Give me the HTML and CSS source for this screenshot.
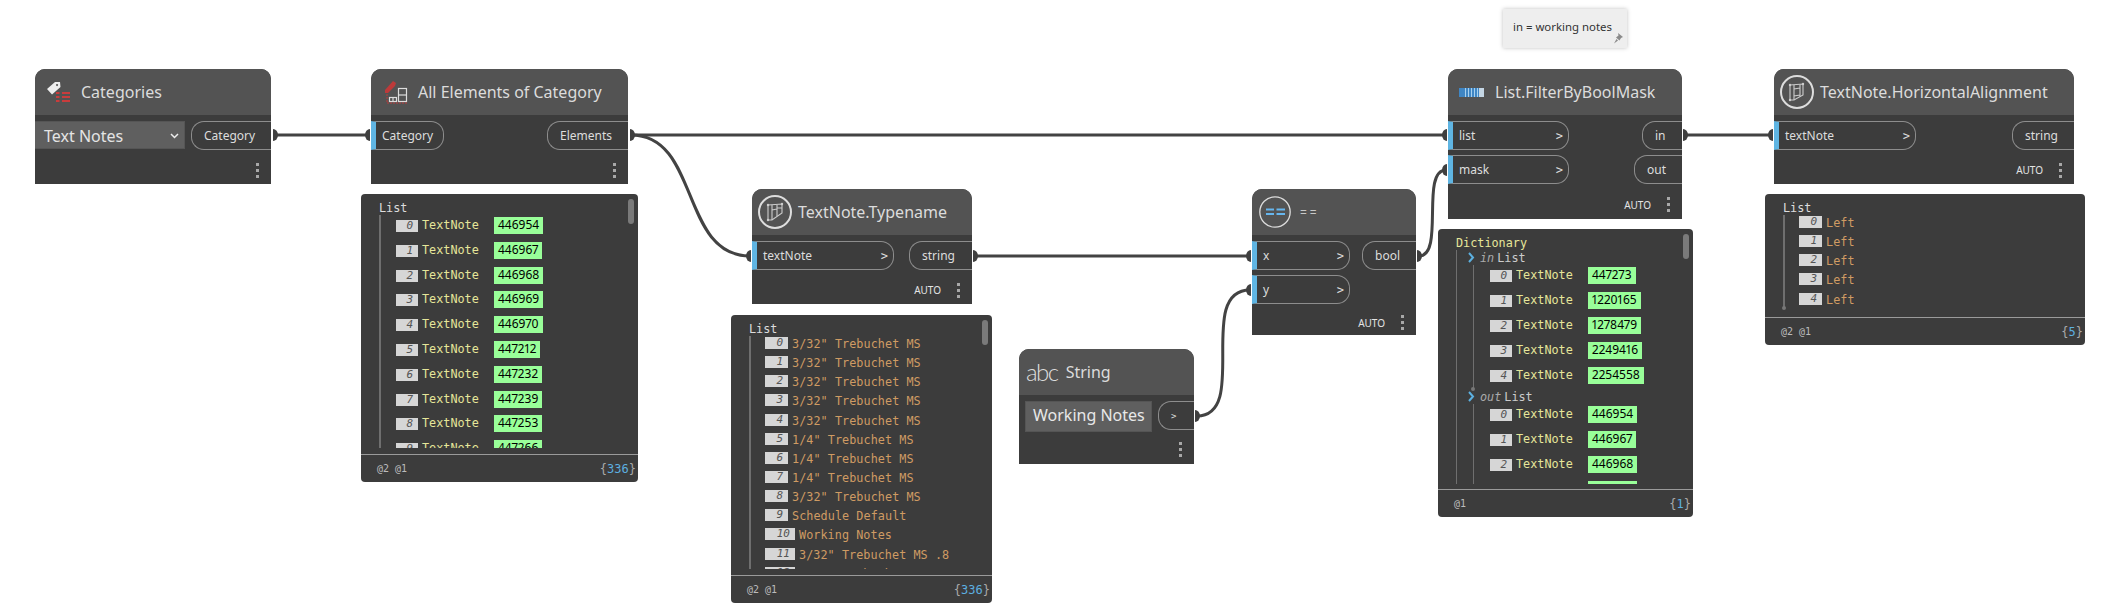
FILE: index.html
```html
<!DOCTYPE html>
<html>
<head>
  <title>Filter text notes by type</title>
  <link rel="stylesheet" href="styles.css">
</head>
<body>
  <main class="canvas">

    <!-- wires sit under the nodes -->
    <svg class="wires" width="2110" height="614" viewBox="0 0 2110 614">
      <path class="wire" d="M274 135 L369 135"/>
      <path class="wire" d="M631 135 L1446 135"/>
      <path class="wire" d="M631 135 C700 135 680 256 750 256"/>
      <path class="wire" d="M975 256 L1250 256"/>
      <path class="wire" d="M1419 256 C1445 256 1420 170 1446 170"/>
      <path class="wire" d="M1197 416 C1250 416 1195 290 1250 290"/>
      <path class="wire" d="M1685 135 L1772 135"/>
      <path class="nub" d="M273 129 a5 6 0 0 1 0 12 z"/>
      <path class="nub" d="M370 129 a5 6 0 0 0 0 12 z"/>
      <path class="nub" d="M630 129 a5 6 0 0 1 0 12 z"/>
      <path class="nub" d="M751 250 a5 6 0 0 0 0 12 z"/>
      <path class="nub" d="M973 250 a5 6 0 0 1 0 12 z"/>
      <path class="nub" d="M1251 250 a5 6 0 0 0 0 12 z"/>
      <path class="nub" d="M1251 284 a5 6 0 0 0 0 12 z"/>
      <path class="nub" d="M1417 250 a5 6 0 0 1 0 12 z"/>
      <path class="nub" d="M1195 410 a5 6 0 0 1 0 12 z"/>
      <path class="nub" d="M1447 129 a5 6 0 0 0 0 12 z"/>
      <path class="nub" d="M1447 164 a5 6 0 0 0 0 12 z"/>
      <path class="nub" d="M1683 129 a5 6 0 0 1 0 12 z"/>
      <path class="nub" d="M1773 129 a5 6 0 0 0 0 12 z"/>
    </svg>

    <!-- Categories -->
    <section class="node node-categories">
      <header class="node-head">
        <svg class="icon icon-categories" width="24" height="22" viewBox="0 0 24 22">
          <path fill="#eee" fill-rule="evenodd" d="M1 8 L9 1 L14 1 L14.500 6 L6 13.500 Z M11 3 a1 1 0 1 0 0.100 0 Z"/>
          <g fill="#c93c3c">
            <rect x="10" y="11" width="3.500" height="2"/><rect x="16" y="11" width="8" height="2"/>
            <rect x="10" y="15" width="3.500" height="2"/><rect x="16" y="15" width="8" height="2"/>
            <rect x="10" y="19" width="3.500" height="2"/><rect x="16" y="19" width="8" height="2"/>
          </g>
        </svg>
        <span class="node-title">Categories</span>
      </header>
      <div class="node-ports">
        <div class="picker">
          <span>Text Notes</span>
          <svg width="9" height="6" viewBox="0 0 9 6"><path d="M1 1 L4.500 4.500 L8 1" fill="none" stroke="#eee" stroke-width="1.500"/></svg>
        </div>
        <div class="port-out w-80">Category</div>
      </div>
      <footer class="node-foot"><span class="dots"></span></footer>
    </section>

    <!-- All Elements of Category -->
    <section class="node node-elements">
      <header class="node-head">
        <svg class="icon icon-elements" width="25" height="24" viewBox="0 0 25 24">
          <path fill="#bd3a3a" d="M1 10 L9 1 L12 3 L11 6 L4 13 L1 13 Z"/>
          <path d="M3 14 V23 H24" fill="none" stroke="#bd3a3a" stroke-width="1" stroke-dasharray="2 1"/>
          <g fill="none" stroke="#ddd" stroke-width="1.200">
            <rect x="14.500" y="8.500" width="8" height="13"/><path d="M14.500 15 H22.500"/>
            <rect x="5.500" y="17.500" width="7" height="4"/><path d="M9 17.500 V21.500"/>
          </g>
        </svg>
        <span class="node-title">All Elements of Category</span>
      </header>
      <div class="node-ports">
        <div class="port-in w-73"><span>Category</span></div>
        <div class="port-out w-81">Elements</div>
      </div>
      <footer class="node-foot"><span class="dots"></span></footer>
    </section>

    <!-- TextNote.Typename -->
    <section class="node node-typename">
      <header class="node-head">
        <svg class="icon icon-round" width="34" height="34" viewBox="0 0 34 34">
          <circle cx="17" cy="17" r="16" fill="none" stroke="#ddd" stroke-width="2"/>
          <g fill="none" stroke="#ccc" stroke-width="1.100">
            <path d="M10 10 L24 9 V18 L14 25 H10 Z"/>
            <path d="M14 10 V25 M19 10 V21 M14 15 L19 14 M19 13 H24"/>
          </g>
          <g fill="#ccc">
            <circle cx="10" cy="25" r="1.200"/><circle cx="24" cy="9" r="1.200"/><circle cx="10" cy="10" r="1.200"/>
          </g>
        </svg>
        <span class="node-title">TextNote.Typename</span>
      </header>
      <div class="node-ports">
        <div class="port-in w-142"><span>textNote</span><b>&gt;</b></div>
        <div class="port-out w-63">string</div>
      </div>
      <footer class="node-foot"><span class="auto">AUTO</span><span class="dots"></span></footer>
    </section>

    <!-- == -->
    <section class="node node-equals">
      <header class="node-head">
        <svg class="icon icon-equals" width="32" height="32" viewBox="0 0 32 32">
          <circle cx="16" cy="16" r="15.200" fill="none" stroke="#ddd" stroke-width="1.300"/>
          <path d="M7 13.500 H15 M17.500 13.500 H26 M7 18 H15 M17.500 18 H26" stroke="#66b6ee" stroke-width="2"/>
        </svg>
        <span class="node-title title-equals">==</span>
      </header>
      <div class="node-ports">
        <div class="port-stack">
          <div class="port-in w-98"><span>x</span><b>&gt;</b></div>
          <div class="port-in w-98"><span>y</span><b>&gt;</b></div>
        </div>
        <div class="port-out w-54">bool</div>
      </div>
      <footer class="node-foot"><span class="auto">AUTO</span><span class="dots"></span></footer>
    </section>

    <!-- String -->
    <section class="node node-string">
      <header class="node-head">
        <span class="icon-abc">abc</span>
        <span class="node-title">String</span>
      </header>
      <div class="node-ports">
        <div class="text-field">Working Notes</div>
        <div class="port-out w-36"><b class="small-arrow">&gt;</b></div>
      </div>
      <footer class="node-foot"><span class="dots"></span></footer>
    </section>

    <!-- List.FilterByBoolMask -->
    <aside class="note">in = working notes
      <svg class="pin" width="10" height="11" viewBox="0 0 10 11">
        <path fill="#8a8a8a" d="M5 0 L10 4 L8 5 L6.500 7.500 L3 4.500 L5.500 2.500 Z M3.500 6 L5 7.500 L1 10.500 Z"/>
      </svg>
    </aside>
    <section class="node node-filter">
      <header class="node-head">
        <svg class="icon icon-filter" width="25" height="9" viewBox="0 0 25 9">
          <rect width="25" height="9" fill="#3f86c4"/>
          <path d="M6.500 0 V9 M9.500 0 V9 M12.500 0 V9 M15.500 0 V9 M18.500 0 V9" stroke="#a8d0ee" stroke-width="1"/>
          <rect x="20" width="5" height="9" fill="#c4d6e4"/>
        </svg>
        <span class="node-title">List.FilterByBoolMask</span>
      </header>
      <div class="node-ports">
        <div class="port-stack">
          <div class="port-in w-121"><span>list</span><b>&gt;</b></div>
          <div class="port-in w-121"><span>mask</span><b>&gt;</b></div>
        </div>
        <div class="port-stack end">
          <div class="port-out w-40">in</div>
          <div class="port-out w-48">out</div>
        </div>
      </div>
      <footer class="node-foot"><span class="auto">AUTO</span><span class="dots"></span></footer>
    </section>

    <!-- TextNote.HorizontalAlignment -->
    <section class="node node-alignment">
      <header class="node-head">
        <svg class="icon icon-round" width="34" height="34" viewBox="0 0 34 34">
          <circle cx="17" cy="17" r="16" fill="none" stroke="#ddd" stroke-width="2"/>
          <g fill="none" stroke="#ccc" stroke-width="1.100">
            <path d="M10 10 L23 9 V20 L14 25 H10 Z"/>
            <path d="M14 10 V25 M20 9.500 V21.500 M14 14 L20 13 M14 21 L20 20"/>
          </g>
          <g fill="#ccc">
            <circle cx="10" cy="25" r="1.200"/><circle cx="23" cy="9" r="1.200"/><circle cx="10" cy="10" r="1.200"/>
          </g>
        </svg>
        <span class="node-title">TextNote.HorizontalAlignment</span>
      </header>
      <div class="node-ports">
        <div class="port-in w-142"><span>textNote</span><b>&gt;</b></div>
        <div class="port-out w-62">string</div>
      </div>
      <footer class="node-foot"><span class="auto">AUTO</span><span class="dots"></span></footer>
    </section>

    <!-- watch: elements -->
    <aside class="watch watch-elements">
      <div class="watch-body">
        <div class="tree-label">List</div>
        <div class="tree-root clip">
          <div class="row"><i>0</i><span class="val-type">TextNote</span><em>446954</em></div>
          <div class="row"><i>1</i><span class="val-type">TextNote</span><em>446967</em></div>
          <div class="row"><i>2</i><span class="val-type">TextNote</span><em>446968</em></div>
          <div class="row"><i>3</i><span class="val-type">TextNote</span><em>446969</em></div>
          <div class="row"><i>4</i><span class="val-type">TextNote</span><em>446970</em></div>
          <div class="row"><i>5</i><span class="val-type">TextNote</span><em>447212</em></div>
          <div class="row"><i>6</i><span class="val-type">TextNote</span><em>447232</em></div>
          <div class="row"><i>7</i><span class="val-type">TextNote</span><em>447239</em></div>
          <div class="row"><i>8</i><span class="val-type">TextNote</span><em>447253</em></div>
          <div class="row"><i>9</i><span class="val-type">TextNote</span><em>447266</em></div>
        </div>
        <span class="scroll"></span>
      </div>
      <footer class="watch-foot"><span>@2 @1</span><span class="count">{<b>336</b>}</span></footer>
    </aside>

    <!-- watch: type names -->
    <aside class="watch watch-names">
      <div class="watch-body">
        <div class="tree-label">List</div>
        <div class="tree-root clip tight">
          <div class="row"><i>0</i><span class="val-str">3/32" Trebuchet MS</span></div>
          <div class="row"><i>1</i><span class="val-str">3/32" Trebuchet MS</span></div>
          <div class="row"><i>2</i><span class="val-str">3/32" Trebuchet MS</span></div>
          <div class="row"><i>3</i><span class="val-str">3/32" Trebuchet MS</span></div>
          <div class="row"><i>4</i><span class="val-str">3/32" Trebuchet MS</span></div>
          <div class="row"><i>5</i><span class="val-str">1/4" Trebuchet MS</span></div>
          <div class="row"><i>6</i><span class="val-str">1/4" Trebuchet MS</span></div>
          <div class="row"><i>7</i><span class="val-str">1/4" Trebuchet MS</span></div>
          <div class="row"><i>8</i><span class="val-str">3/32" Trebuchet MS</span></div>
          <div class="row"><i>9</i><span class="val-str">Schedule Default</span></div>
          <div class="row"><i class="two">10</i><span class="val-str">Working Notes</span></div>
          <div class="row"><i class="two">11</i><span class="val-str">3/32" Trebuchet MS .8</span></div>
          <div class="row"><i class="two">12</i><span class="val-str">3/32" Trebuchet MS</span></div>
        </div>
        <span class="scroll"></span>
      </div>
      <footer class="watch-foot"><span>@2 @1</span><span class="count">{<b>336</b>}</span></footer>
    </aside>

    <!-- watch: dictionary -->
    <aside class="watch watch-dict">
      <div class="watch-body">
        <div class="tree-label dict-label">Dictionary</div>
        <div class="tree-root clip dict-root">
          <div class="dict-key">
            <svg width="7" height="11" viewBox="0 0 7 11"><path d="M1 1 L5 5.500 L1 10" fill="none" stroke="#5cb0e0" stroke-width="2"/></svg>
            <span class="key-name">in</span><span>List</span>
          </div>
          <div class="dict-rows ended">
            <div class="row"><i>0</i><span class="val-type">TextNote</span><em>447273</em></div>
            <div class="row"><i>1</i><span class="val-type">TextNote</span><em>1220165</em></div>
            <div class="row"><i>2</i><span class="val-type">TextNote</span><em>1278479</em></div>
            <div class="row"><i>3</i><span class="val-type">TextNote</span><em>2249416</em></div>
            <div class="row"><i>4</i><span class="val-type">TextNote</span><em>2254558</em></div>
          </div>
          <div class="dict-key">
            <svg width="7" height="11" viewBox="0 0 7 11"><path d="M1 1 L5 5.500 L1 10" fill="none" stroke="#5cb0e0" stroke-width="2"/></svg>
            <span class="key-name">out</span><span>List</span>
          </div>
          <div class="dict-rows">
            <div class="row"><i>0</i><span class="val-type">TextNote</span><em>446954</em></div>
            <div class="row"><i>1</i><span class="val-type">TextNote</span><em>446967</em></div>
            <div class="row"><i>2</i><span class="val-type">TextNote</span><em>446968</em></div>
            <div class="row"><i>3</i><span class="val-type">TextNote</span><em>446969</em></div>
          </div>
        </div>
        <span class="scroll"></span>
      </div>
      <footer class="watch-foot"><span>@1</span><span class="count">{<b>1</b>}</span></footer>
    </aside>

    <!-- watch: alignment -->
    <aside class="watch watch-align">
      <div class="watch-body">
        <div class="tree-label">List</div>
        <div class="tree-root tight ended">
          <div class="row"><i>0</i><span class="val-str">Left</span></div>
          <div class="row"><i>1</i><span class="val-str">Left</span></div>
          <div class="row"><i>2</i><span class="val-str">Left</span></div>
          <div class="row"><i>3</i><span class="val-str">Left</span></div>
          <div class="row"><i>4</i><span class="val-str">Left</span></div>
        </div>
      </div>
      <footer class="watch-foot"><span>@2 @1</span><span class="count">{<b>5</b>}</span></footer>
    </aside>

  </main>
</body>
</html>
```

FILE: styles.css
```css
body {
  margin: 0;
  background-color: white;
  font-family: "Noto Sans", sans-serif;
}

.canvas {
  position: relative;
  width: 2110px;
  height: 614px;
  overflow: hidden;
}

.wires {
  position: absolute;
  left: 0;
  top: 0;
}

.wire {
  fill: none;
  stroke: #434343;
  stroke-width: 3;
}

.nub {
  fill: #3f3f3f;
}

/* nodes */
.node {
  position: absolute;
  display: flex;
  flex-direction: column;
  background-color: #3c3c3c;
  border-radius: 10px 10px 0 0;
  color: #ddd;
}

.node-categories { left: 35px; top: 69px; width: 236px; height: 115px; }
.node-elements { left: 371px; top: 69px; width: 257px; height: 115px; }
.node-typename { left: 752px; top: 189px; width: 220px; height: 115px; }
.node-equals { left: 1252px; top: 189px; width: 164px; height: 146px; }
.node-string { left: 1019px; top: 349px; width: 175px; height: 115px; }
.node-filter { left: 1448px; top: 69px; width: 234px; height: 150px; }
.node-alignment { left: 1774px; top: 69px; width: 300px; height: 115px; }

.node-head {
  display: flex;
  align-items: center;
  flex: none;
  height: 46px;
  background-color: #535353;
  border-radius: 10px 10px 0 0;
}

.node-title {
  font-size: 16px;
  color: #dcdcdc;
  white-space: nowrap;
}

.title-equals {
  letter-spacing: 3px;
  font-size: 12px;
  color: #c8c8c8;
}

.icon { flex: none; }
.icon-categories { margin: 0 11px 0 11px; }
.icon-elements { margin: 0 9px 0 13px; }
.icon-round { margin: 0 6px 0 6px; }
.icon-equals { margin: 0 9px 0 7px; }
.icon-filter { margin: 0 11px 0 11px; }

.icon-abc {
  margin: 0 8px 0 7px;
  font-family: Lato, sans-serif;
  font-weight: 300;
  font-size: 24px;
  letter-spacing: -1.500px;
  line-height: 1;
  color: #ddd;
}

.node-ports {
  display: flex;
  justify-content: space-between;
  align-items: flex-start;
  flex: none;
  padding-top: 6px;
}

.port-stack {
  display: flex;
  flex-direction: column;
  gap: 5px;
}

.port-stack.end { align-items: flex-end; }

.port-in,
.port-out {
  display: flex;
  align-items: center;
  box-sizing: border-box;
  height: 29px;
  font-size: 12px;
  color: #ddd;
  border: 1px solid #8d8d8d;
}

.port-in {
  justify-content: space-between;
  padding: 0 5px 0 6px;
  border-left: 5px solid #5fb5e3;
  border-radius: 0 13px 13px 0;
}

.port-out {
  padding-left: 12px;
  border-right: none;
  border-radius: 13px 0 0 13px;
}

.port-in b,
.port-out b {
  font-weight: normal;
  font-family: "DejaVu Sans Mono", monospace;
}

.port-out b.small-arrow {
  font-size: 9px;
}

.w-36 { width: 36px; }
.w-40 { width: 40px; }
.w-48 { width: 48px; }
.w-54 { width: 54px; }
.w-62 { width: 62px; }
.w-63 { width: 63px; }
.w-73 { width: 73px; }
.w-80 { width: 80px; }
.w-81 { width: 81px; }
.w-98 { width: 98px; }
.w-121 { width: 121px; }
.w-142 { width: 142px; }

.picker {
  display: flex;
  align-items: center;
  justify-content: space-between;
  box-sizing: border-box;
  width: 150px;
  height: 28px;
  padding: 1px 5px 0 9px;
  background-color: #5f5f5f;
  border: 1px solid #555;
  border-left: none;
  font-size: 16px;
  color: #e4e4e4;
}

.text-field {
  box-sizing: border-box;
  width: 127px;
  height: 31px;
  margin-left: 6px;
  padding-left: 7px;
  line-height: 26px;
  background-color: #5f5f5f;
  border: 1px solid #555;
  font-size: 16px;
  color: #e8e8e8;
  white-space: nowrap;
}

.node-foot {
  display: flex;
  align-items: center;
  justify-content: flex-end;
  gap: 16px;
  flex: 1;
  padding: 6px 12px 0 0;
}

.node-string .node-foot { padding-top: 3px; }

.auto {
  font-size: 10px;
  color: #e4e4e4;
}

.dots {
  width: 3px;
  height: 15px;
  background: repeating-linear-gradient(#a8a8a8 0 3px, transparent 3px 6px);
}

/* sticky note */
.note {
  position: absolute;
  left: 1503px;
  top: 9px;
  box-sizing: border-box;
  width: 124px;
  height: 39px;
  padding: 10px 0 0 10px;
  background-color: #eeeeee;
  box-shadow: 0 0 4px rgba(0, 0, 0, 0.25);
  font-size: 11.400px;
  line-height: 15px;
  color: #333;
}

.pin {
  position: absolute;
  right: 4px;
  bottom: 4px;
}

/* watch panels */
.watch {
  position: absolute;
  display: flex;
  flex-direction: column;
  background-color: #3c3c3c;
  border-radius: 4px;
  color: #ddd;
  font-family: "DejaVu Sans Mono", monospace;
  font-size: 11.800px;
}

.watch-elements { left: 361px; top: 194px; width: 277px; height: 288px; }
.watch-names { left: 731px; top: 315px; width: 261px; height: 288px; }
.watch-dict { left: 1438px; top: 229px; width: 255px; height: 288px; }
.watch-align { left: 1765px; top: 194px; width: 320px; height: 151px; }

.watch-body {
  position: relative;
  flex: 1;
  padding-top: 7px;
}

.tree-label {
  height: 14px;
  margin-left: 18px;
  line-height: 14px;
}

.dict-label { color: #e6e69a; }

.tree-root {
  position: relative;
  margin-left: 18px;
  padding: 0 0 0 14px;
  border-left: 2px solid #6f6f6f;
}

.clip {
  overflow: hidden;
}

.watch-elements .tree-root { height: 233px; padding-left: 15px; }
.watch-elements .row { height: 24.800px; }
.watch-elements .row i { width: 22px; }
.watch-names .tree-root { height: 233px; }
.watch-align .tree-root { height: 93px; }
.watch-align .row { height: 19.500px; }

.dict-root {
  height: 234px;
  padding-left: 0;
  border-left-width: 1px;
}

.ended::after {
  content: "";
  position: absolute;
  left: -3px;
  bottom: -2px;
  width: 4px;
  height: 4px;
  border-radius: 50%;
  background-color: #777;
}

.row {
  display: flex;
  align-items: flex-start;
  height: 25px;
  padding-top: 2px;
  box-sizing: border-box;
  white-space: nowrap;
}

.row i {
  flex: none;
  box-sizing: border-box;
  width: 21px;
  height: 12px;
  margin: 3px 4px 0 0;
  padding-right: 5px;
  background-color: #d6d6d6;
  color: #555;
  font-size: 11px;
  line-height: 12px;
  text-align: right;
}

.row i.two { width: 30px; }

.row span {
  line-height: 16px;
}

.val-type {
  width: 72px;
  color: #e6e69a;
}

.val-str {
  color: #cf9b63;
  letter-spacing: 0.050px;
}

.row em {
  padding: 0 4px;
  height: 17px;
  background-color: #99ff99;
  font-family: "Noto Sans", sans-serif;
  font-style: normal;
  font-size: 12px;
  font-variant-numeric: proportional-nums;
  line-height: 16px;
  color: black;
}

.tight .row {
  height: 19.150px;
  padding-top: 0;
}

.tight .row i {
  width: 23px;
  margin: 1px 4px 0 0;
}

.tight .row i.two { width: 30px; }

.dict-key {
  display: flex;
  align-items: center;
  gap: 5px;
  height: 15px;
  padding-left: 11px;
  color: #ccc;
}

.key-name {
  margin-right: -2px;
  font-style: italic;
  color: #aaa;
}

.dict-rows {
  position: relative;
  height: 124px;
  margin-left: 16px;
  padding-left: 16px;
  border-left: 1px solid #6f6f6f;
}

.dict-rows .row i { width: 22px; margin-right: 4px; }

.scroll {
  position: absolute;
  top: 5px;
  right: 4px;
  width: 6px;
  height: 25px;
  border-radius: 3px;
  background-color: #7a7a7a;
}

.watch-foot {
  display: flex;
  align-items: center;
  justify-content: space-between;
  flex: none;
  height: 28px;
  padding: 0 2px 0 16px;
  border-top: 1px solid #9a9a9a;
  box-sizing: border-box;
  font-size: 10px;
  color: #bbb;
}

.count {
  font-size: 12px;
  color: #aaa;
}

.count b {
  font-weight: normal;
  color: #5cb0e0;
}
```
